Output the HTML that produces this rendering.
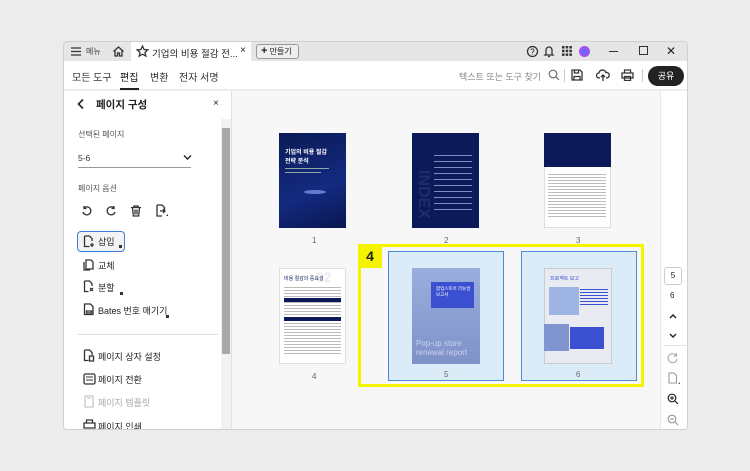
<!DOCTYPE html>
<html><head><meta charset="utf-8"><style>
*{margin:0;padding:0;box-sizing:border-box}
body{width:750px;height:471px;background:#ececec;font-family:"Liberation Sans","Noto Sans CJK KR",sans-serif;position:relative;overflow:hidden;color:#222}
.a{position:absolute}
.win{left:63px;top:41px;width:625px;height:389px;background:#fff;border:1px solid #d0d0d0;border-radius:4px;overflow:hidden}
.t{font-size:9px;white-space:nowrap}
.ic{stroke:#333;fill:none;stroke-width:1.3}
</style></head><body>
<div class="a win">
 <!-- tab bar -->
 <div class="a" style="left:0;top:0;width:625px;height:19px;background:#e6e6e6"></div>
 <div class="a" style="left:67px;top:0;width:120px;height:20px;background:#fff"></div>
 <svg class="a" style="left:6px;top:4px" width="12" height="11"><path d="M1 2h10M1 5.5h10M1 9h10" stroke="#333" stroke-width="1.3"/></svg>
 <div class="a t" style="left:22px;top:4px;font-size:8px;color:#444">메뉴</div>
 <svg class="a" style="left:48px;top:3px" width="13" height="13"><path d="M1.5 6.5L6.5 2l5 4.5M3 5.5V11h2.5V8h2v3H10V5.5" class="ic"/></svg>
 <svg class="a" style="left:72px;top:3px" width="13" height="13"><path d="M6.5 1l1.6 3.5 3.7.4-2.8 2.5.8 3.7-3.3-1.9-3.3 1.9.8-3.7L1.2 4.9l3.7-.4z" class="ic" stroke-width="1"/></svg>
 <div class="a t" style="left:88px;top:4px;font-size:9.5px;color:#222">기업의 비용 절감 전...</div>
 <div class="a t" style="left:176px;top:3px;font-size:10px">×</div>
 <div class="a" style="left:192px;top:2px;width:43px;height:15px;border:1px solid #999;border-radius:3px;background:#eee"></div>
 <div class="a t" style="left:197px;top:3px;font-size:8px"><b style="font-size:11px">+</b> 만들기</div>
 <svg class="a" style="left:462px;top:3px" width="13" height="13"><circle cx="6.5" cy="6.5" r="5" class="ic"/><text x="4.3" y="9.5" font-size="8" font-family="Liberation Sans">?</text></svg>
 <svg class="a" style="left:479px;top:2px" width="12" height="14"><path d="M3 10V6a3 3 0 016 0v4l1 1H2zM5 12.5h2" class="ic"/></svg>
 <svg class="a" style="left:498px;top:4px" width="10" height="10"><g fill="#333"><rect x="0" y="0" width="2.5" height="2.5"/><rect x="3.7" y="0" width="2.5" height="2.5"/><rect x="7.4" y="0" width="2.5" height="2.5"/><rect x="0" y="3.7" width="2.5" height="2.5"/><rect x="3.7" y="3.7" width="2.5" height="2.5"/><rect x="7.4" y="3.7" width="2.5" height="2.5"/><rect x="0" y="7.4" width="2.5" height="2.5"/><rect x="3.7" y="7.4" width="2.5" height="2.5"/><rect x="7.4" y="7.4" width="2.5" height="2.5"/></g></svg>
 <div class="a" style="left:515px;top:4px;width:11px;height:11px;border-radius:50%;background:radial-gradient(circle,#5a6cff,#d040e0)"></div>
 <div class="a" style="left:545px;top:9px;width:9px;height:1.3px;background:#333"></div>
 <div class="a" style="left:575px;top:4px;width:9px;height:9px;border:1.3px solid #333"></div>
 <div class="a t" style="left:602px;top:2px;font-size:12px">✕</div>
 <!-- toolbar -->
 <div class="a" style="left:0;top:47px;width:625px;height:2px;background:#eee"></div>
 <div class="a t" style="left:8px;top:27px;font-size:10px;color:#333">모든 도구</div>
 <div class="a t" style="left:56px;top:27px;font-size:10px;color:#111">편집</div>
 <div class="a" style="left:56px;top:46px;width:19px;height:2px;background:#222"></div>
 <div class="a t" style="left:86px;top:27px;font-size:10px;color:#333">변환</div>
 <div class="a t" style="left:115px;top:27px;font-size:10px;color:#333">전자 서명</div>
 <div class="a t" style="left:395px;top:28px;font-size:9px;color:#888">텍스트 또는 도구 찾기</div>
 <svg class="a" style="left:484px;top:27px" width="12" height="12"><circle cx="5" cy="5" r="3.8" stroke="#666" fill="none" stroke-width="1.1"/><path d="M8 8l3 3" stroke="#666" stroke-width="1.1"/></svg>
 <div class="a" style="left:500px;top:27px;width:1px;height:13px;background:#ccc"></div>
 <svg class="a" style="left:507px;top:27px" width="12" height="12"><path d="M1 1h8l2 2v8H1z M3.5 1v3h4V1 M3 11V7.5h6V11" class="ic"/></svg>
 <svg class="a" style="left:532px;top:26px" width="14" height="14"><path d="M4 10H3a2.5 2.5 0 010-5 3.5 3.5 0 016.8-.5A2.5 2.5 0 0111 10h-1M7 13V7M5 9l2-2 2 2" class="ic"/></svg>
 <svg class="a" style="left:557px;top:27px" width="13" height="12"><path d="M3.5 4V1h6v3M1 4h11v5H1zM3.5 7.5h6v4h-6z" class="ic"/></svg>
 <div class="a" style="left:578px;top:27px;width:1px;height:13px;background:#ccc"></div>
 <div class="a" style="left:584px;top:24px;width:36px;height:20px;border-radius:10px;background:#222;color:#fff;font-size:9px;text-align:center;line-height:20px">공유</div>
 <!-- left panel -->
 <div class="a" style="left:167px;top:49px;width:1px;height:340px;background:#e0e0e0"></div>
 <svg class="a" style="left:12px;top:56px" width="10" height="12"><path d="M7 1.5L2.5 6 7 10.5" stroke="#222" stroke-width="1.6" fill="none"/></svg>
 <div class="a t" style="left:32px;top:55px;font-size:10.5px;font-weight:bold">페이지 구성</div>
 <div class="a t" style="left:149px;top:56px;font-size:10px">×</div>
 <div class="a" style="left:157px;top:77px;width:10px;height:312px;background:#f2f2f2"></div>
 <div class="a" style="left:158px;top:86px;width:8px;height:226px;background:#a8a8a8"></div>
 <div class="a t" style="left:14px;top:87px;font-size:8px;color:#555">선택된 페이지</div>
 <div class="a t" style="left:14px;top:111px;font-size:8.5px;color:#333">5-6</div>
 <svg class="a" style="left:119px;top:112px" width="9" height="7"><path d="M1 1.5l3.5 3.5L8 1.5" stroke="#222" stroke-width="1.4" fill="none"/></svg>
 <div class="a" style="left:14px;top:125px;width:113px;height:1px;background:#999"></div>
 <div class="a t" style="left:14px;top:141px;font-size:8px;color:#555">페이지 옵션</div>
 <svg class="a" style="left:17px;top:163px" width="12" height="12"><path d="M3 3a4 4 0 11-1 4M3 1v2.5h2.5" class="ic"/></svg>
 <svg class="a" style="left:41px;top:163px" width="12" height="12"><path d="M9 3a4 4 0 10 1 4M9 1v2.5H6.5" class="ic"/></svg>
 <svg class="a" style="left:66px;top:163px" width="12" height="12"><path d="M1 2.5h10M4 2.5V1h4v1.5M2.5 2.5l.8 8.5h5.4l.8-8.5M5 4.5v5M7 4.5v5" class="ic" stroke-width="1.1"/></svg>
 <svg class="a" style="left:91px;top:162px" width="14" height="14"><path d="M2 1h5l2.5 2.5V7M2 1v11h5M5 7h5M8 5l2 2-2 2" class="ic" stroke-width="1.1"/><path d="M11 12l2-2v2z" fill="#333"/></svg>
 <div class="a" style="left:13px;top:189px;width:48px;height:21px;border:1.5px solid #3a7fe0;border-radius:4px;background:#f3f3f3"></div>
 <svg class="a" style="left:19px;top:193px" width="12" height="13"><path d="M1.5 1h5l2.5 2.5V6M1.5 1v10.5h5M9 8v4M7 10h4" class="ic" stroke-width="1.1"/></svg>
 <div class="a t" style="left:34px;top:193px;font-size:9px">삽입</div>
 <div class="a" style="left:55px;top:203px;width:3px;height:3px;background:#333"></div>
 <svg class="a" style="left:19px;top:216px" width="12" height="13"><path d="M3 2h5l2 2v7H3zM1 4v8h6" class="ic" stroke-width="1.1"/></svg>
 <div class="a t" style="left:34px;top:217px;font-size:9px">교체</div>
 <svg class="a" style="left:19px;top:238px" width="12" height="13"><path d="M1.5 1h5L9 3.5V6M1.5 1v10.5h4M7 8l3 3M10 8l-3 3" class="ic" stroke-width="1.1"/></svg>
 <div class="a t" style="left:34px;top:239px;font-size:9px">분할</div>
 <div class="a" style="left:56px;top:250px;width:3px;height:3px;background:#333"></div>
 <svg class="a" style="left:19px;top:261px" width="12" height="13"><path d="M1.5 1h6L10 3.5v8H1.5z M3.5 8h5v2h-5z" class="ic" stroke-width="1.1"/></svg>
 <div class="a t" style="left:34px;top:262px;font-size:9px">Bates 번호 매기기</div>
 <div class="a" style="left:102px;top:273px;width:3px;height:3px;background:#333"></div>
 <div class="a" style="left:14px;top:292px;width:140px;height:1px;background:#ddd"></div>
 <svg class="a" style="left:19px;top:307px" width="12" height="13"><path d="M1.5 1h5L9 3.5V6M1.5 1v10.5h4M6.5 7h4v5h-4z" class="ic" stroke-width="1.1"/></svg>
 <div class="a t" style="left:34px;top:308px;font-size:9px">페이지 상자 설정</div>
 <svg class="a" style="left:19px;top:331px" width="13" height="12"><rect x="1" y="1" width="11" height="10" rx="1.5" class="ic" stroke-width="1.2"/><path d="M3 4h7M3 7h7" stroke="#333"/></svg>
 <div class="a t" style="left:34px;top:331px;font-size:9px">페이지 전환</div>
 <svg class="a" style="left:19px;top:353px" width="12" height="13"><path d="M2 1h8v11H2zM4 3h4" stroke="#bbb" fill="none" stroke-width="1.1"/></svg>
 <div class="a t" style="left:34px;top:354px;font-size:9px;color:#aaa">페이지 템플릿</div>
 <svg class="a" style="left:19px;top:377px" width="13" height="12"><path d="M3.5 4V1h6v3M1 4h11v5H1z" class="ic"/></svg>
 <div class="a t" style="left:34px;top:378px;font-size:9px">페이지 인쇄</div>
 <!-- content -->
 <div class="a" style="left:168px;top:49px;width:428px;height:340px;background:#f7f7f7"></div>
 <!-- page 1 -->
 <div class="a" style="left:215px;top:91px;width:67px;height:95px;background:linear-gradient(160deg,#0b1a55,#132a80 60%,#0a1650)"></div>
 <div class="a t" style="left:221px;top:107px;font-size:6px;color:#fff;font-weight:bold;line-height:9px">기업의 비용 절감<br>전략 분석</div>
 <div class="a" style="left:221px;top:126px;width:44px;height:1px;background:#8aa"></div>
 <div class="a" style="left:221px;top:130px;width:36px;height:1px;background:#8aa"></div>
 <div class="a" style="left:240px;top:148px;width:22px;height:4px;border-radius:50%;background:#9ab4ff;opacity:.6"></div>
 <div class="a t" style="left:248px;top:194px;font-size:8px;color:#666">1</div>
 <!-- page 2 -->
 <div class="a" style="left:348px;top:91px;width:67px;height:95px;background:#0c1a5a"></div>
 <div class="a t" style="font-size:16px;color:#1e2d6e;font-weight:bold;transform:rotate(90deg);transform-origin:0 0;left:368px;top:128px">INDEX</div>
 <div class="a" style="left:370px;top:110px;width:38px;height:60px;background:repeating-linear-gradient(#0c1a5a 0 3px,#7d8bc0 3px 4px,#0c1a5a 4px 6px)"></div>
 <div class="a t" style="left:380px;top:194px;font-size:8px;color:#666">2</div>
 <!-- page 3 -->
 <div class="a" style="left:480px;top:91px;width:67px;height:95px;background:#fff;border:1px solid #ddd"></div>
 <div class="a" style="left:480px;top:91px;width:67px;height:34px;background:#0c1a5a"></div>
 <div class="a" style="left:484px;top:130px;width:58px;height:45px;background:repeating-linear-gradient(#fff 0 2px,#bbb 2px 3px)"></div>
 <div class="a t" style="left:512px;top:194px;font-size:8px;color:#666">3</div>
 <!-- page 4 -->
 <div class="a" style="left:215px;top:226px;width:67px;height:96px;background:#fff;border:1px solid #ddd"></div>
 <div class="a t" style="left:252px;top:227px;font-size:14px;color:#e8eaf2;font-weight:bold">02</div>
 <div class="a t" style="left:220px;top:233px;font-size:5px;color:#0c1a5a">비용 절감의 중요성</div>
 <div class="a" style="left:220px;top:243px;width:57px;height:70px;background:repeating-linear-gradient(#fff 0 2px,#bbb 2px 3px)"></div>
 <div class="a" style="left:220px;top:256px;width:57px;height:4px;background:#0c1a5a"></div>
 <div class="a" style="left:220px;top:275px;width:57px;height:4px;background:#0c1a5a"></div>
 <div class="a t" style="left:248px;top:330px;font-size:8px;color:#666">4</div>
 <!-- yellow -->
 <div class="a" style="left:294px;top:202px;width:286px;height:143px;border:3px solid #f5f500"></div>
 <div class="a" style="left:294px;top:202px;width:24px;height:24px;background:#f5f500;font-size:14px;font-weight:bold;text-align:center;line-height:24px">4</div>
 <div class="a" style="left:324px;top:209px;width:116px;height:130px;background:#dcebf8;border:1.5px solid #4a8ad8"></div>
 <div class="a" style="left:457px;top:209px;width:116px;height:130px;background:#dcebf8;border:1.5px solid #4a8ad8"></div>
 <div class="a" style="left:348px;top:226px;width:68px;height:96px;background:linear-gradient(#9aaedd,#7f92c8)"></div>
 <div class="a" style="left:367px;top:240px;width:43px;height:26px;background:#3b50d0"></div>
 <div class="a t" style="left:372px;top:244px;font-size:4.5px;color:#fff">팝업스토어 리뉴얼<br>보고서</div>
 <div class="a t" style="left:352px;top:297px;font-size:8px;color:#c8d2ee;line-height:9px">Pop-up store<br>renewal report</div>
 <div class="a t" style="left:380px;top:328px;font-size:8px;color:#666">5</div>
 <div class="a" style="left:480px;top:226px;width:68px;height:96px;background:#e9ebf2;border:1px solid #ccc"></div>
 <div class="a t" style="left:486px;top:233px;font-size:5px;color:#3b50d0">프로젝트 보고</div>
 <div class="a" style="left:485px;top:245px;width:30px;height:28px;background:#9eb4e3"></div>
 <div class="a" style="left:516px;top:245px;width:28px;height:20px;background:repeating-linear-gradient(#e9ebf2 0 2px,#3b50d0 2px 3px)"></div>
 <div class="a" style="left:480px;top:282px;width:25px;height:27px;background:#8094d0"></div>
 <div class="a" style="left:506px;top:285px;width:34px;height:22px;background:#3b50d0"></div>
 <div class="a t" style="left:512px;top:328px;font-size:8px;color:#666">6</div>
 <!-- right rail -->
 <div class="a" style="left:596px;top:49px;width:1px;height:340px;background:#e6e6e6"></div>
 <div class="a" style="left:600px;top:225px;width:18px;height:18px;border:1px solid #ccc;border-radius:3px;font-size:8px;text-align:center;line-height:16px">5</div>
 <div class="a t" style="left:606px;top:249px;font-size:8px">6</div>
 <svg class="a" style="left:604px;top:271px" width="10" height="7"><path d="M2 5l3-3 3 3" stroke="#222" stroke-width="1.4" fill="none"/></svg>
 <svg class="a" style="left:604px;top:290px" width="10" height="7"><path d="M2 2l3 3 3-3" stroke="#222" stroke-width="1.4" fill="none"/></svg>
 <div class="a" style="left:600px;top:303px;width:22px;height:1px;background:#e0e0e0"></div>
 <svg class="a" style="left:603px;top:310px" width="12" height="12"><path d="M9.5 4A4.5 4.5 0 1 0 10 7M9.5 1v3h-3" stroke="#aaa" fill="none" stroke-width="1.1"/></svg>
 <svg class="a" style="left:603px;top:330px" width="13" height="13"><path d="M2 1h5l2.5 2.5V11H2z" stroke="#999" fill="none" stroke-width="1.1"/><path d="M11 12l2-2v2z" fill="#666"/></svg>
 <svg class="a" style="left:603px;top:351px" width="12" height="12"><circle cx="5" cy="5" r="3.8" stroke="#222" fill="none" stroke-width="1.2"/><path d="M8 8l3 3M3.2 5h3.6M5 3.2v3.6" stroke="#222" stroke-width="1.2"/></svg>
 <svg class="a" style="left:603px;top:372px" width="12" height="12"><circle cx="5" cy="5" r="3.8" stroke="#999" fill="none" stroke-width="1.2"/><path d="M8 8l3 3M3.2 5h3.6" stroke="#999" stroke-width="1.2"/></svg>
</div>
</body></html>
